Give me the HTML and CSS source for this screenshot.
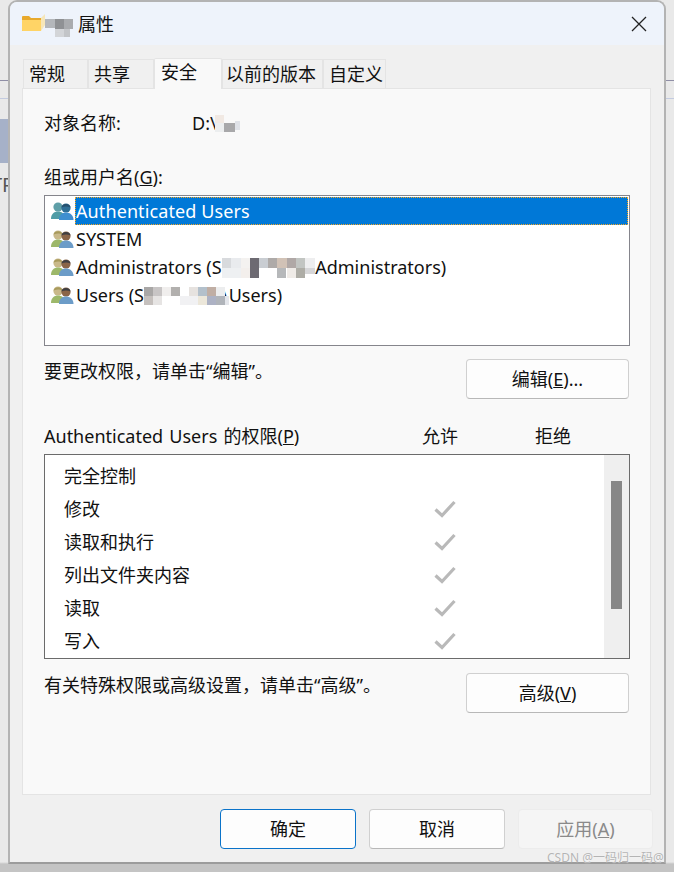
FILE: index.html
```html
<!DOCTYPE html>
<html lang="zh-CN">
<head>
  <meta charset="UTF-8" />
  <title>属性</title>
  <link rel="stylesheet" href="styles.css">
</head>
<body>
  <svg width="0" height="0" class="defs">
    <symbol id="users" viewBox="0 0 24 20">
      <circle cx="8" cy="6" r="4.6" fill="#c9b98a"/>
      <path d="M3.6 5.5C3.8 1.5 12 .8 12.4 5.5 10 4 7 4 3.600 5.500Z" fill="#a89a5c"/>
      <path d="M1 18c0-5 3-7.500 7-7.500s7 2.500 7 7.500Z" fill="#9db86a"/>
      <circle cx="16" cy="7" r="4.600" fill="#8a6548"/>
      <path d="M11.500 6.500C11.500 1.800 20.500 1.800 20.500 6.500 18 5 14 5 11.500 6.500Z" fill="#3f3f42"/>
      <path d="M9 19c0-5 3-7.500 7-7.500s7.500 2.500 7.500 7.500Z" fill="#6c9cc8"/>
    </symbol>
    <symbol id="users-sel" viewBox="0 0 24 20">
      <circle cx="8" cy="6" r="4.600" fill="#5f9fa8"/>
      <path d="M1 18c0-5 3-7.500 7-7.500s7 2.500 7 7.500Z" fill="#4f9ca6"/>
      <circle cx="16" cy="7" r="4.600" fill="#2f6f96"/>
      <path d="M11.500 6.500C11.500 1.800 20.500 1.800 20.500 6.500 18 5 14 5 11.500 6.500Z" fill="#26506e"/>
      <path d="M9 19c0-5 3-7.500 7-7.500s7.500 2.500 7.500 7.500Z" fill="#3f8fd0"/>
    </symbol>
    <symbol id="check" viewBox="0 0 22 18">
      <path d="M1.500 9.500 8 15.500 20.500 2" fill="none" stroke="#b9b9b9" stroke-width="3.200"/>
    </symbol>
  </svg>

  <div class="desktop">
    <div class="line line-a"></div>
    <div class="line line-b"></div>
    <div class="thumb-img"></div>
    <div class="tp">TP</div>
  </div>

  <div class="window">
    <div class="titlebar">
      <svg class="folder" width="24" height="18" viewBox="0 0 24 18">
        <path d="M0 3q0-1 1-1h6l2 2h10v13H1q-1 0-1-1Z" fill="#e8a92c"/>
        <path d="M0 6h19v11H1q-1 0-1-1Z" fill="#ffd466"/>
        <path d="M19 4l4-4v11l-4 6Z" fill="#f6e6b8"/>
      </svg>
      <svg class="title-blur" width="28" height="19" viewBox="0 0 28 19">
        <rect x="0" y="1" width="10" height="9" fill="#b4b7bb"/>
        <rect x="10" y="1" width="9" height="10" fill="#8f9194"/>
        <rect x="19" y="1" width="9" height="10" fill="#a9abae"/>
        <rect x="10" y="11" width="9" height="8" fill="#d3d5d8"/>
        <rect x="19" y="11" width="6" height="8" fill="#c3c5c8"/>
      </svg>
      <span class="title-text">属性</span>
      <svg class="close" width="16" height="16" viewBox="0 0 16 16">
        <path d="M1 1 15 15M15 1 1 15" stroke="#222" stroke-width="1.300" fill="none"/>
      </svg>
    </div>

    <div class="tabs">
      <div class="tab tab-1">常规</div>
      <div class="tab tab-2">共享</div>
      <div class="tab tab-3 active">安全</div>
      <div class="tab tab-4">以前的版本</div>
      <div class="tab tab-5">自定义</div>
    </div>

    <div class="panel">
      <div class="object-row">
        <span class="object-label">对象名称:</span>
        <span>D:\<svg class="mosaic mosaic-path" width="25" height="18" viewBox="0 0 25 18">
          <rect x="0" y="0" width="9" height="8" fill="#f1e9e3"/>
          <rect x="9" y="8" width="11" height="9" fill="#a8a8aa"/>
          <rect x="0" y="8" width="9" height="9" fill="#eceeef"/>
          <rect x="20" y="6" width="5" height="9" fill="#dfe2e8"/>
        </svg></span>
      </div>

      <div class="group-label">组或用户名(<u>G</u>):</div>
      <div class="listbox">
        <div class="user-row">
          <svg class="user-icon"><use href="#users-sel"/></svg>
          <span class="user-name selected">Authenticated Users</span>
        </div>
        <div class="user-row">
          <svg class="user-icon"><use href="#users"/></svg>
          <span class="user-name">SYSTEM</span>
        </div>
        <div class="user-row">
          <svg class="user-icon"><use href="#users"/></svg>
          <span class="user-name">Administrators (S<svg class="mosaic mosaic-admin" width="96" height="20" viewBox="0 0 96 20">
            <rect x="0" y="0" width="9" height="10" fill="#d8dadd"/>
            <rect x="9" y="0" width="10" height="10" fill="#e9ebee"/>
            <rect x="19" y="0" width="9" height="10" fill="#f4f2f0"/>
            <rect x="28" y="0" width="9" height="20" fill="#6d6a72"/>
            <rect x="37" y="0" width="9" height="10" fill="#c9cdd2"/>
            <rect x="46" y="0" width="9" height="10" fill="#aeaaa8"/>
            <rect x="55" y="0" width="10" height="10" fill="#d1c2b6"/>
            <rect x="65" y="0" width="9" height="10" fill="#b0a8a6"/>
            <rect x="74" y="0" width="9" height="10" fill="#c2c5c2"/>
            <rect x="83" y="0" width="10" height="10" fill="#eeeeef"/>
            <rect x="0" y="10" width="19" height="10" fill="#eef0f2"/>
            <rect x="19" y="10" width="9" height="10" fill="#f3efec"/>
            <rect x="55" y="10" width="9" height="10" fill="#b6b8ba"/>
            <rect x="65" y="10" width="9" height="10" fill="#efebe7"/>
            <rect x="74" y="10" width="9" height="10" fill="#aeada6"/>
            <rect x="83" y="10" width="10" height="6" fill="#d6d6d8"/>
          </svg>\Administrators)</span>
        </div>
        <div class="user-row">
          <svg class="user-icon"><use href="#users"/></svg>
          <span class="user-name">Users (S<svg class="mosaic mosaic-users" width="85" height="18" viewBox="0 0 85 18">
            <rect x="0" y="0" width="9" height="9" fill="#a9a7a6"/>
            <rect x="9" y="0" width="9" height="9" fill="#c8c5c5"/>
            <rect x="18" y="0" width="9" height="9" fill="#f0eeed"/>
            <rect x="27" y="0" width="9" height="9" fill="#b2b0ae"/>
            <rect x="0" y="9" width="9" height="9" fill="#c5c0bd"/>
            <rect x="9" y="9" width="9" height="9" fill="#e6e4e3"/>
            <rect x="36" y="9" width="18" height="9" fill="#f1f1f3"/>
            <rect x="45" y="0" width="9" height="9" fill="#e6e2df"/>
            <rect x="54" y="0" width="9" height="9" fill="#b3c0cb"/>
            <rect x="63" y="0" width="9" height="9" fill="#c0aea4"/>
            <rect x="72" y="0" width="9" height="9" fill="#ecedee"/>
            <rect x="54" y="9" width="9" height="9" fill="#ece7da"/>
            <rect x="63" y="9" width="9" height="9" fill="#adb2c4"/>
            <rect x="72" y="9" width="9" height="9" fill="#b0b4ba"/>
            <rect x="81" y="9" width="4" height="9" fill="#e3e5ea"/>
          </svg>\Users)</span>
        </div>
      </div>

      <div class="action-row">
        <span>要更改权限，请单击“编辑”。</span>
        <button class="btn">编辑(<u>E</u>)...</button>
      </div>

      <div class="perm-head">
        <span class="perm-title">Authenticated Users 的权限(<u>P</u>)</span>
        <span>允许</span>
        <span>拒绝</span>
      </div>
      <div class="permbox">
        <div class="perm-list">
          <div class="perm-row"><span>完全控制</span></div>
          <div class="perm-row"><span>修改</span><svg class="check"><use href="#check"/></svg></div>
          <div class="perm-row"><span>读取和执行</span><svg class="check"><use href="#check"/></svg></div>
          <div class="perm-row"><span>列出文件夹内容</span><svg class="check"><use href="#check"/></svg></div>
          <div class="perm-row"><span>读取</span><svg class="check"><use href="#check"/></svg></div>
          <div class="perm-row"><span>写入</span><svg class="check"><use href="#check"/></svg></div>
        </div>
        <div class="scrollbar"><div class="scroll-thumb"></div></div>
      </div>

      <div class="action-row action-row-2">
        <span>有关特殊权限或高级设置，请单击“高级”。</span>
        <button class="btn">高级(<u>V</u>)</button>
      </div>
    </div>

    <div class="footer">
      <button class="btn btn-foot btn-default">确定</button>
      <button class="btn btn-foot">取消</button>
      <button class="btn btn-foot btn-disabled">应用(<u>A</u>)</button>
    </div>
  </div>

  <div class="watermark">CSDN @一码归一码@</div>
</body>
</html>
```

FILE: styles.css
```css
* {
  box-sizing: border-box;
}

html, body {
  margin: 0;
  height: 872px;
  overflow: hidden;
}

body {
  position: relative;
  background: #e9e9e9;
  font-family: "Noto Sans", "Noto Sans CJK SC", sans-serif;
  font-size: 18px;
  line-height: 24px;
  color: #111;
  padding-left: 8px;
}

.defs {
  position: absolute;
}

/* stuff behind the dialog */
.desktop {
  position: absolute;
  inset: 0;
  background: linear-gradient(#e9e9e9 0, #e9e9e9 862px, #c4c4c4 864px);
}

.line {
  position: absolute;
  left: 0;
  right: 0;
  height: 1px;
}

.line-a {
  top: 80px;
  background: #8f8ea6;
}

.line-b {
  top: 98px;
  background: #c3cbe0;
}

.thumb-img {
  position: absolute;
  left: 0;
  top: 119px;
  width: 9px;
  height: 44px;
  background: #a6b1c8;
}

.tp {
  position: absolute;
  left: -9px;
  top: 173px;
  font-size: 20px;
  color: #555;
}

.window {
  position: relative;
  width: 658px;
  height: 864px;
  border: 2px solid #b3b3b3;
  border-bottom-color: #9c9c9c;
  border-radius: 9px 9px 0 0;
  background: #f0f0f0;
  overflow: hidden;
}

.titlebar {
  height: 43px;
  background: #eef3fb;
  display: flex;
  align-items: center;
  padding-left: 12px;
}

.folder {
  margin-top: -2px;
  flex: none;
}

.title-blur {
  margin-top: 7px;
  margin-left: -1px;
  flex: none;
}

.title-text {
  margin-left: 5px;
}

.close {
  margin-left: auto;
  margin-right: 17px;
}

.tabs {
  display: flex;
  height: 30px;
  margin: 13px 0 0 13px;
  position: relative;
  z-index: 1;
}

.tab {
  height: 29px;
  margin-top: 1px;
  padding-left: 5px;
  background: #f0f0f0;
  border: 1px solid #e4e4e4;
  border-bottom: none;
  line-height: 28px;
  white-space: nowrap;
}

.tab-1 { width: 65px; }
.tab-2 { width: 66px; }
.tab-3 { width: 68px; }
.tab-4 { width: 101px; padding-left: 3px; }
.tab-5 { width: 63px; }

.tab.active {
  height: 31px;
  margin-top: 0;
  padding-left: 6px;
  background: #f9f9f9;
  border-radius: 2px 2px 0 0;
  line-height: 27px;
}

.panel {
  width: 629px;
  height: 707px;
  margin-left: 12px;
  background: #f9f9f9;
  border: 1px solid #e4e4e4;
  padding: 22px 0 0 21px;
}

.object-row {
  display: flex;
}

.object-label {
  width: 148px;
}

.mosaic {
  position: relative;
  vertical-align: middle;
  margin: -6px 0 -4px;
}

.mosaic-path {
  margin-left: -2px;
}

.mosaic-admin {
  margin-right: -9px;
}

.mosaic-users {
  margin-right: -7px;
}

.group-label {
  margin-top: 30px;
}

.listbox {
  width: 586px;
  height: 151px;
  margin-top: 6px;
  background: #fff;
  border: 1px solid #85858c;
  padding-top: 1px;
}

.user-row {
  display: flex;
  align-items: center;
  height: 28px;
  padding-left: 5px;
}

.user-icon {
  width: 24px;
  height: 20px;
  flex: none;
  margin-right: 1px;
}

.user-name {
  padding-left: 1px;
  white-space: nowrap;
}

.user-name.selected {
  flex: 1;
  height: 28px;
  line-height: 28px;
  margin-right: 1px;
  background: #0078d7;
  color: #fff;
  letter-spacing: 0.1px;
  outline: 1px dotted #f5a623;
  outline-offset: -1px;
}

.action-row {
  display: flex;
  justify-content: space-between;
  width: 585px;
  height: 40px;
  margin-top: 13px;
}

.action-row-2 {
  margin-top: 14px;
}

.btn {
  width: 163px;
  height: 40px;
  padding: 0;
  font: inherit;
  color: inherit;
  background: #fdfdfd;
  border: 1px solid #d0d0d0;
  border-bottom-color: #b8b8b8;
  border-radius: 4px;
}

.perm-head {
  display: grid;
  grid-template-columns: 378px 113px 36px;
  margin-top: 25px;
  white-space: nowrap;
}

.perm-title {
  word-spacing: 1.5px;
}

.permbox {
  display: flex;
  width: 586px;
  height: 205px;
  margin-top: 6px;
  background: #fff;
  border: 1px solid #6b6b6b;
}

.perm-list {
  flex: 1;
  padding: 4px 0 0 19px;
  overflow: hidden;
}

.perm-row {
  display: grid;
  grid-template-columns: 370px 22px;
  align-items: center;
  height: 33px;
}

.check {
  width: 22px;
  height: 18px;
  grid-column: 2;
}

.scrollbar {
  width: 25px;
  background: #efefef;
  padding: 26px 0 0 7px;
}

.scroll-thumb {
  width: 11px;
  height: 128px;
  background: #878787;
}

.footer {
  display: flex;
  justify-content: flex-end;
  gap: 13px;
  padding: 14px 11px 0 0;
}

.btn-foot {
  width: 136px;
}

.btn-foot:last-child {
  width: 135px;
}

.btn-default {
  border: 1.5px solid #0a73c9;
}

.btn-disabled {
  background: #f5f5f5;
  border-color: #ececec;
  color: #8a8a8a;
}

.watermark {
  position: absolute;
  left: 547px;
  top: 850px;
  font-size: 12px;
  line-height: 16px;
  color: #b4b4b4;
  text-shadow: 0 0 1px #fff;
  white-space: nowrap;
}
```
